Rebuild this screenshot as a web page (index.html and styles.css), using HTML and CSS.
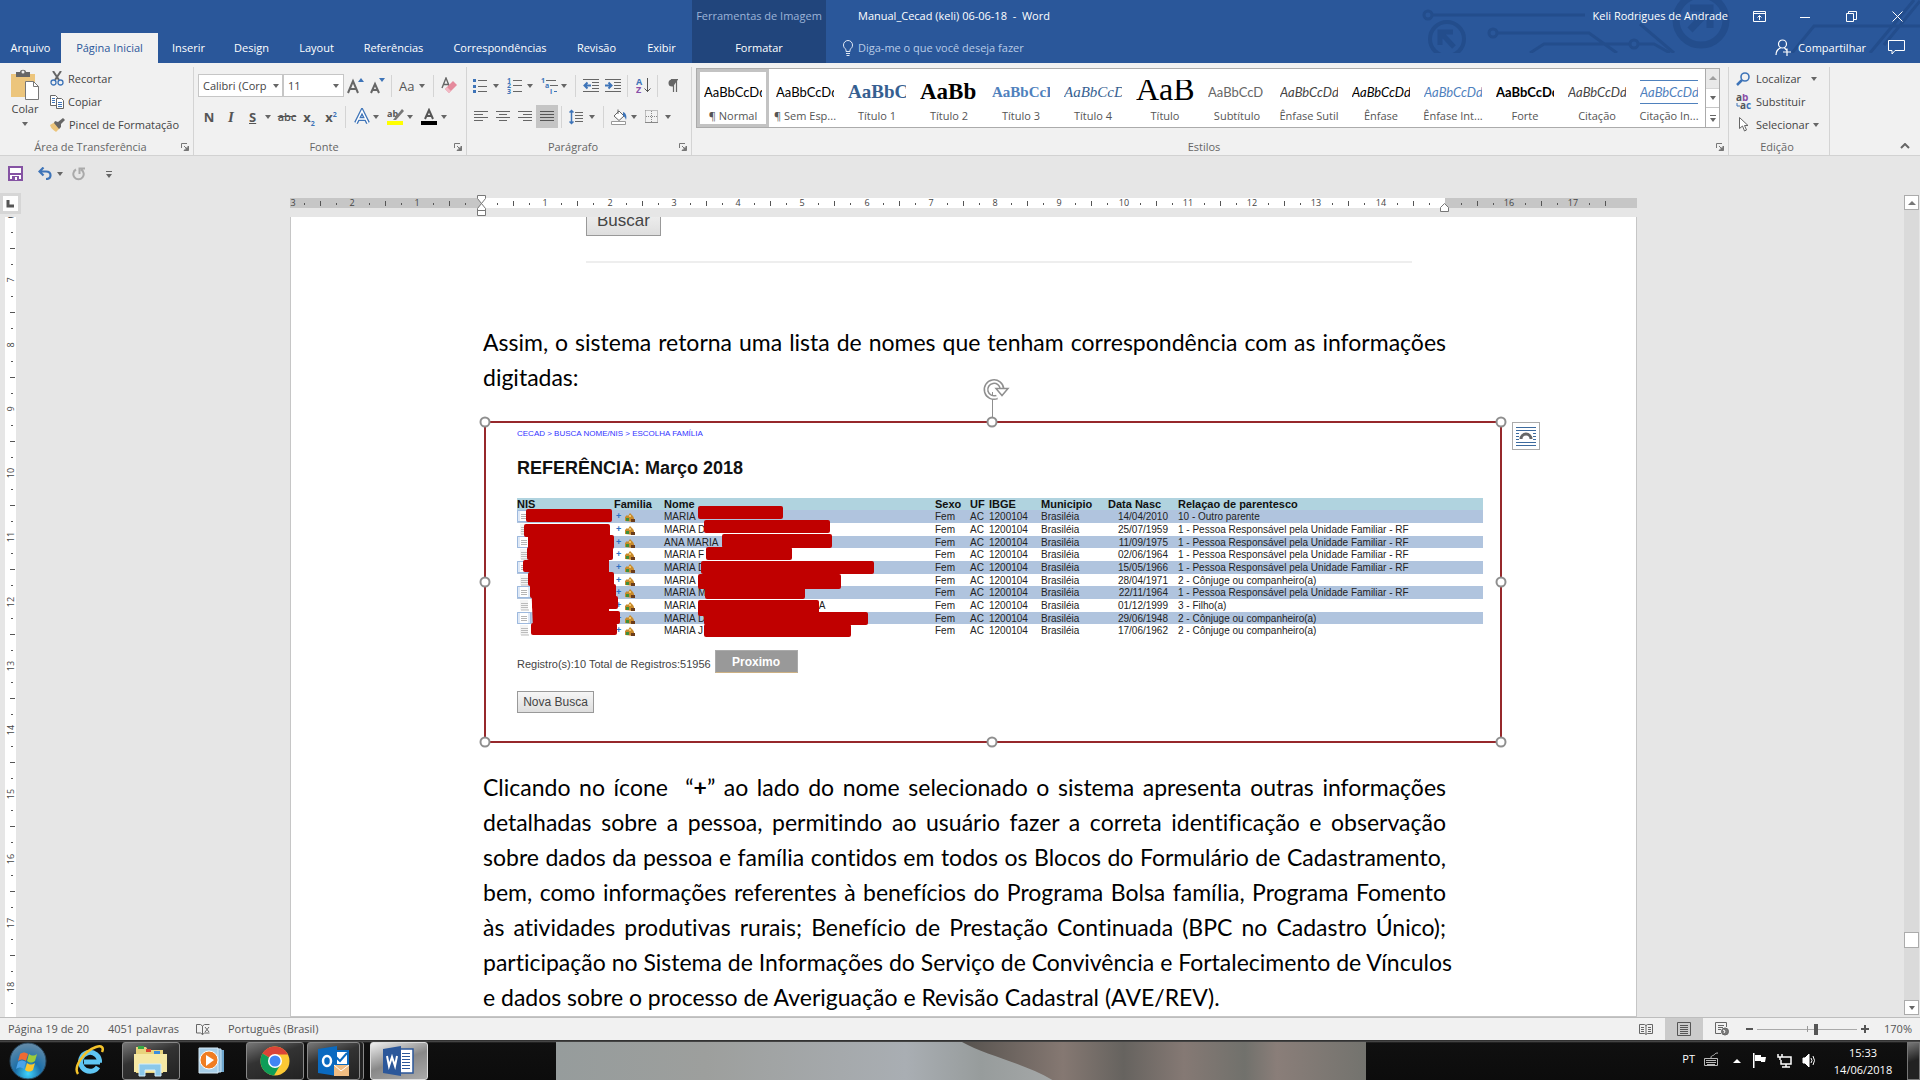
FILE: index.html
```html
<!DOCTYPE html>
<html lang="pt-BR">
<head>
<meta charset="utf-8">
<title>Manual_Cecad (keli) 06-06-18 - Word</title>
<link rel="stylesheet" href="styles.css">
</head>
<body>
<svg class="defs" aria-hidden="true">
  <symbol id="launch" viewBox="0 0 8 8"><path d="M.5 5V.5H6M3 3l3 3M7.5 3v4.5H3z" fill="none" stroke="#777"/><path d="M7.500 3.500v4h-4z" fill="#777"/></symbol>
  <symbol id="doc" viewBox="0 0 14 12"><path d="M.5.500h13v11H.5z" fill="#dfe9f6" stroke="#9db9de"/><path d="M3 1h8v10H3z" fill="#fff"/><path d="M4 4.500h6M4 6.500h6M4 8.500h6" stroke="#b5b5b5"/></symbol>
  <symbol id="doc2" viewBox="0 0 14 12"><path d="M3 1h8v10H3z" fill="#f4f4f4"/><path d="M4 4.500h7M4 6.500h7M4 8.500h7M4 11h8" stroke="#bbb"/></symbol>
  <symbol id="fam" viewBox="0 0 10 9"><path d="M0 8V4l2-2 1 1 2-3 3 3 1 2v4z" fill="#c98a2b"/><path d="M1 5h3v3H1z" fill="#3f8f3c"/><path d="M6 6h4v3H6z" fill="#6b3d1c"/><path d="M4 2h2v2H4z" fill="#f1c667"/></symbol>
</svg>

<header class="top">
  <svg class="circuit" viewBox="0 0 500 53" width="500" height="53" fill="none" stroke="#234d8c" stroke-width="3" aria-hidden="true">
    <circle cx="8" cy="15" r="4"/><path d="M12 15h153"/><circle cx="27" cy="39" r="17" stroke-width="4"/><path d="M34 47L21 33M20 45V32h13" stroke-width="5"/>
    <circle cx="73" cy="33" r="4"/><path d="M77 33h92l28 20M110 53l14-9h85"/><circle cx="214" cy="44" r="4"/><path d="M218 44h16l16 9M220 24l34 29"/>
    <circle cx="281" cy="20" r="25" stroke-width="7"/><path d="M270 30l19-20M270 8h20v20" stroke-width="7"/>
    <path d="M372 53l22-27h106M450 53L494 0M464 45L500 1"/>
  </svg>
  <nav class="tabs">
    <button class="tab">Arquivo</button><button class="tab on">Página Inicial</button><button class="tab">Inserir</button><button class="tab">Design</button><button class="tab">Layout</button><button class="tab">Referências</button><button class="tab">Correspondências</button><button class="tab">Revisão</button><button class="tab">Exibir</button>
  </nav>
  <div class="ctx"><span>Ferramentas de Imagem</span><button class="tab">Formatar</button></div>
  <div class="topright">
    <div class="titlerow">
      <h1>Manual_Cecad (keli) 06-06-18&nbsp; -&nbsp; Word</h1>
      <span class="user">Keli Rodrigues de Andrade</span>
      <button class="win" aria-label="Opções da Faixa de Opções"><svg width="13" height="11" fill="none" stroke="#fff"><path d="M.5.500h12v10H.5zM.5 2.500h12M6.500 9V4.500M4.500 6.500l2-2 2 2"/></svg></button>
      <button class="win" aria-label="Minimizar"><svg width="10" height="11" stroke="#fff"><path d="M0 6.500h10"/></svg></button>
      <button class="win" aria-label="Restaurar"><svg width="11" height="11" fill="none" stroke="#fff"><path d="M.5 2.500h7v8h-7zM2.500 2V.5h8v8H8"/></svg></button>
      <button class="win" aria-label="Fechar"><svg width="11" height="11" stroke="#fff"><path d="M.5.500l10 10M10.500.500l-10 10"/></svg></button>
    </div>
    <div class="tellrow">
      <svg width="12" height="16" fill="none" stroke="#dfe8f5"><path d="M4 11.500V9.500C2 8 1.500 6.500 1.500 5a4.500 4.500 0 0 1 9 0c0 1.500-.5 3-2.500 4.500v2zM4 13.500h4M4.500 15.500h3"/></svg>
      <input class="tell" type="text" aria-label="Diga-me o que você deseja fazer" placeholder="Diga-me o que você deseja fazer">
      <button class="share"><svg width="16" height="17" fill="none" stroke="#fff" stroke-width="1.200"><circle cx="7.500" cy="5" r="4"/><path d="M1 16c0-4 2-6 4.500-7M9.500 9l2 2M8 13h8M12 9.500V17"/></svg>Compartilhar</button>
      <button class="comment" aria-label="Comentários"><svg width="17" height="15" fill="none" stroke="#fff"><path d="M.5.500h16v10H7l-3 3.500V10.500H.5z"/></svg></button>
    </div>
  </div>
</header>

<section class="ribbon">
  <div class="group clip">
    <div class="body cliprow">
      <button class="paste">
        <svg width="30" height="32"><path d="M1 5h24v23H1z" fill="#ecc57c"/><path d="M6 3h4c0-3 6-3 6 0h4v5H6z" fill="#666"/><circle cx="13" cy="3" r="1.500" fill="#eee"/><path d="M15.500 12.500h8l5 5v13h-13z" fill="#fff" stroke="#777"/><path d="M23.500 12.500v5h5" fill="none" stroke="#777"/></svg>
        <span>Colar</span><i class="caret"></i>
      </button>
      <div class="stack">
        <button><svg width="14" height="15" fill="none"><path d="M3 0l6 9M11 0L5 9" stroke="#666" stroke-width="2"/><circle cx="3.500" cy="11.500" r="2.500" stroke="#3e74b8" stroke-width="1.300"/><circle cx="10.500" cy="11.500" r="2.500" stroke="#3e74b8" stroke-width="1.300"/></svg>Recortar</button>
        <button><svg width="14" height="14" fill="#fff" stroke="#666"><path d="M.5.500h5l2 2v8h-7z"/><path d="M6.500 3.500h5l2 2v8h-7z"/><path d="M2 3.500h3M2 5.500h3M2 7.500h3M8 7.500h4M8 9.500h4M8 11.500h4" stroke="#3e74b8"/></svg>Copiar</button>
        <button><svg width="15" height="14"><path d="M0 7l5-3 5 6-4 4C4 12 1 11 0 7z" fill="#ecc57c"/><path d="M5 3l3 1 5-4 2 2-4 4v3L9 11 4 5z" fill="#666"/></svg>Pincel de Formatação</button>
      </div>
    </div>
    <div class="gl"><span>Área de Transferência</span><button aria-label="Abrir Área de Transferência"><svg width="8" height="8"><use href="#launch"/></svg></button></div>
  </div>

  <div class="group font">
    <div class="body rows">
      <div class="row">
        <span class="combo c1"><input type="text" value="Calibri (Corp" aria-label="Fonte"><i class="caret"></i></span><span class="combo c2"><input type="text" value="11" aria-label="Tamanho da fonte"><i class="caret"></i></span>
        <button class="ib" aria-label="Aumentar"><svg width="18" height="18"><path d="M2 16L7 4l5 12M4 12h6" fill="none" stroke="#666" stroke-width="2"/><path d="M12 5l3-4 3 4z" fill="#3e74b8"/></svg></button>
        <button class="ib" aria-label="Diminuir"><svg width="18" height="18"><path d="M3 16l4-9 4 9M5 13h5" fill="none" stroke="#666" stroke-width="2"/><path d="M11 1h6l-3 4z" fill="#3e74b8"/></svg></button>
        <i class="sep"></i>
        <button class="ib split"><span class="aa">Aa</span><i class="caret"></i></button>
        <i class="sep"></i>
        <button class="ib" aria-label="Limpar formatação"><svg width="16" height="17"><path d="M1 11L5 1l4 10M2.500 7.500h5" fill="none" stroke="#666" stroke-width="1.400"/><path d="M4 12l8-8 4 4-8 8z" fill="#e58a9c"/><path d="M4 12l2-2 4 4-2 2z" fill="#f2b9c4"/></svg></button>
      </div>
      <div class="row">
        <button class="ib"><b>N</b></button><button class="ib"><b class="it">I</b></button><button class="ib split"><b class="un">S</b><i class="caret"></i></button><button class="ib"><s>abc</s></button><button class="ib"><b>x<sub>2</sub></b></button><button class="ib"><b>x<sup>2</sup></b></button>
        <i class="sep"></i>
        <button class="ib split" aria-label="Efeitos de texto"><svg width="18" height="18" fill="none"><path d="M3 15L9 3l6 12M5 11h8" stroke="#3e74b8" stroke-width="4"/><path d="M3 15L9 3l6 12M5 11h8" stroke="#fff" stroke-width="1.500"/></svg><i class="caret"></i></button>
        <button class="ib split" aria-label="Realce"><svg width="17" height="18"><text x="0" y="9" font-size="9" font-weight="700" fill="#555" font-family="Open Sans">ab</text><path d="M15 1l2 2-8 9H6z" fill="#777"/><path d="M0 13h16v4H0z" fill="#ff0"/></svg><i class="caret"></i></button>
        <button class="ib split" aria-label="Cor da fonte"><svg width="16" height="18"><path d="M4 11L8 2l4 9M5.500 8h5" fill="none" stroke="#555" stroke-width="2"/><path d="M0 13h16v4H0z"/></svg><i class="caret"></i></button>
      </div>
    </div>
    <div class="gl"><span>Fonte</span><button aria-label="Abrir Fonte"><svg width="8" height="8"><use href="#launch"/></svg></button></div>
  </div>

  <div class="group para">
    <div class="body rows">
      <div class="row">
        <button class="ib split" aria-label="Marcadores"><svg width="15" height="15"><path d="M5 2.500h9M5 8.500h9M5 13.500h9" stroke="#666"/><path d="M0 1h3v3H0zM0 7h3v3H0zM0 12h3v3H0z" fill="#3e74b8"/></svg><i class="caret"></i></button>
        <button class="ib split" aria-label="Numeração"><svg width="15" height="17"><path d="M6 3.500h9M6 8.500h9M6 14.500h9" stroke="#666"/><g font-size="7" font-weight="700" fill="#3e74b8" font-family="Open Sans"><text y="6">1</text><text y="11">2</text><text y="17">3</text></g></svg><i class="caret"></i></button>
        <button class="ib split" aria-label="Lista multinível"><svg width="17" height="17"><path d="M5 3.500h10M9 8.500h8" stroke="#666"/><path d="M13 14.500h3" stroke="#3e74b8"/><g font-size="7" font-weight="700" fill="#3e74b8" font-family="Open Sans"><text y="6">1</text><text x="4" y="11">a</text><text x="9" y="17">i</text></g></svg><i class="caret"></i></button>
        <i class="sep"></i>
        <button class="ib" aria-label="Diminuir recuo"><svg width="16" height="14" fill="none"><path d="M0 .5h16M9 3.500h7M9 6.500h7M9 9.500h7M0 12.500h16" stroke="#666"/><path d="M8 6.500H2M4.500 3.500l-3 3 3 3" stroke="#3e74b8" stroke-width="2"/></svg></button>
        <button class="ib" aria-label="Aumentar recuo"><svg width="16" height="14" fill="none"><path d="M0 .5h16M9 3.500h7M9 6.500h7M9 9.500h7M0 12.500h16" stroke="#666"/><path d="M0 6.500h6M3.500 3.500l3 3-3 3" stroke="#3e74b8" stroke-width="2"/></svg></button>
        <i class="sep"></i>
        <button class="ib" aria-label="Classificar"><svg width="15" height="17"><g font-size="9" font-weight="700" font-family="Open Sans"><text y="8" fill="#3e74b8">A</text><text y="16" fill="#8a4fa8">Z</text></g><path d="M11.500 1v14M8.500 11.500l3 3 3-3" fill="none" stroke="#555"/></svg></button>
        <i class="sep"></i>
        <button class="ib" aria-label="Mostrar tudo"><svg width="10" height="13"><path d="M10 .5H4a3.500 3.500 0 0 0 0 7h1" fill="#666"/><path d="M5.500 0v13M8.500 0v13M3 .5h7" stroke="#666" stroke-width="1.200"/></svg></button>
      </div>
      <div class="row">
        <button class="ib" aria-label="Esquerda"><svg width="14" height="12" stroke="#666"><path d="M0 .5h14M0 3.500h9M0 6.500h14M0 9.500h9"/></svg></button>
        <button class="ib" aria-label="Centralizar"><svg width="14" height="12" stroke="#666"><path d="M0 .5h14M3 3.500h8M0 6.500h14M3 9.500h8"/></svg></button>
        <button class="ib" aria-label="Direita"><svg width="14" height="12" stroke="#666"><path d="M0 .5h14M5 3.500h9M0 6.500h14M5 9.500h9"/></svg></button>
        <button class="ib sel" aria-label="Justificar"><svg width="14" height="12" stroke="#555"><path d="M0 .5h14M0 3.500h14M0 6.500h14M0 9.500h14"/></svg></button>
        <i class="sep"></i>
        <button class="ib split" aria-label="Espaçamento"><svg width="15" height="16" fill="none"><path d="M6 3.500h8M6 6.500h8M6 9.500h8M6 12.500h8" stroke="#666"/><path d="M2.500 1v14M.5 3.500l2-2 2 2M.5 12.500l2 2 2-2" stroke="#3e74b8" stroke-width="1.500"/></svg><i class="caret"></i></button>
        <i class="sep"></i>
        <button class="ib split" aria-label="Sombreamento"><svg width="17" height="17" fill="none"><path d="M3 8l5-5 5 5-5 4.500z" fill="#fff" stroke="#666"/><path d="M7 6V1.500" stroke="#666"/><path d="M12 4c3 1 4 4 3 8-1-3-2-4-3-4z" fill="#3e74b8"/><path d="M.5 13.500h14v3H.5z" fill="#fff" stroke="#999"/></svg><i class="caret"></i></button>
        <button class="ib split" aria-label="Bordas"><svg width="14" height="14" fill="none" stroke="#888"><path d="M.5.500h12v12M.5.500v12M6.500 1v12M1 6.500h12" stroke-dasharray="1 1"/><path d="M0 12.500h13"/></svg><i class="caret"></i></button>
      </div>
    </div>
    <div class="gl"><span>Parágrafo</span><button aria-label="Abrir Parágrafo"><svg width="8" height="8"><use href="#launch"/></svg></button></div>
  </div>

  <div class="group styles">
    <div class="body gallery">
      <button class="st on"><span class="sm">AaBbCcDd</span><span>¶ Normal</span></button>
      <button class="st"><span class="sm">AaBbCcDd</span><span>¶ Sem Esp...</span></button>
      <button class="st"><span class="sm t1">AaBbCc</span><span>Título 1</span></button>
      <button class="st"><span class="sm t2">AaBb</span><span>Título 2</span></button>
      <button class="st"><span class="sm t3">AaBbCcD</span><span>Título 3</span></button>
      <button class="st"><span class="sm t4">AaBbCcD</span><span>Título 4</span></button>
      <button class="st"><span class="sm t5">AaB</span><span>Título</span></button>
      <button class="st"><span class="sm gray">AaBbCcD</span><span>Subtítulo</span></button>
      <button class="st"><span class="sm ital">AaBbCcDd</span><span>Ênfase Sutil</span></button>
      <button class="st"><span class="sm ital black">AaBbCcDd</span><span>Ênfase</span></button>
      <button class="st"><span class="sm ital blue">AaBbCcDd</span><span>Ênfase Int...</span></button>
      <button class="st"><span class="sm bold">AaBbCcDd</span><span>Forte</span></button>
      <button class="st"><span class="sm ital">AaBbCcDd</span><span>Citação</span></button>
      <button class="st"><span class="sm ital blue lined">AaBbCcDd</span><span>Citação In...</span></button>
      <div class="gs"><button class="off" aria-label="Acima"><i class="tri"></i></button><button aria-label="Abaixo"><i class="caret"></i></button><button class="more" aria-label="Mais"><i class="caret"></i></button></div>
    </div>
    <div class="gl"><span>Estilos</span><button aria-label="Abrir Estilos"><svg width="8" height="8"><use href="#launch"/></svg></button></div>
  </div>

  <div class="group edit">
    <div class="body stack">
      <button><svg width="16" height="14" fill="none"><circle cx="9" cy="5" r="4" stroke="#3e74b8" stroke-width="1.600"/><path d="M6 8l-5 5" stroke="#3e74b8" stroke-width="2.500"/></svg>Localizar<i class="caret far"></i></button>
      <button><svg width="16" height="16" font-size="10" font-weight="700" font-family="Open Sans"><text y="7" fill="#555">a<tspan fill="#8a4fa8">b</tspan></text><text x="4" y="15" fill="#555">a<tspan fill="#3e74b8">c</tspan></text><path d="M1 9v3h3" fill="none" stroke="#3e74b8"/></svg>Substituir</button>
      <button><svg width="16" height="15"><path d="M3.500.500v11l3-2.500 2 5 2-1-2-4.500h3.500z" fill="#fff" stroke="#666"/></svg>Selecionar<i class="caret"></i></button>
    </div>
    <div class="gl"><span>Edição</span></div>
  </div>
  <button class="collapse" aria-label="Recolher"><svg width="10" height="6" fill="none" stroke="#666" stroke-width="2"><path d="M1 5l4-4 4 4"/></svg></button>
</section>

<div class="qat">
  <button aria-label="Salvar"><svg width="15" height="15"><path d="M1 1h13v13H1z" fill="#fff" stroke="#8553a3" stroke-width="2"/><path d="M1 7h13v2H1zM4 10h7v4H4z" fill="#8553a3"/><path d="M7 11h2v3H7z" fill="#fff"/></svg></button>
  <button aria-label="Desfazer"><svg width="15" height="13" fill="none" stroke="#3e74b8" stroke-width="2.200"><path d="M1 4.500h7c6 0 6 7.500 0 7.500M5.500.500l-4 4 4 4"/></svg></button><i class="caret"></i>
  <button aria-label="Refazer"><svg width="14" height="14" fill="none" stroke="#aaa" stroke-width="2"><path d="M4 2.500a5.200 5.200 0 1 0 5 0M7.500 7V1.500H13"/></svg></button>
  <button class="more" aria-label="Personalizar"><i class="caret"></i></button>
</div>

<main class="work">
  <div class="corner"><button aria-label="Tabulação"><svg width="9" height="8"><path d="M2 0v6h6" fill="none" stroke="#555" stroke-width="3"/></svg></button></div>
  <div class="hrule"><svg id="hr" width="1347" height="24" aria-hidden="true"></svg></div>
  <div class="vrule"><svg id="vr" width="11" height="801" aria-hidden="true"></svg></div>
  <div class="view">
    <article class="page">
      <div class="prev"><button class="grey">Buscar</button></div>
      <p><span>Assim, o sistema retorna uma lista de nomes que tenham correspondência com as informações</span> <span class="end">digitadas:</span></p>
      <figure class="pic">
        <nav class="crumb"><a href="#">CECAD &gt; BUSCA NOME/NIS &gt; ESCOLHA FAMÍLIA</a></nav>
        <h2>REFERÊNCIA: Março 2018</h2>
        <table>
          <colgroup><col class="k1"><col class="k2"><col class="k3"><col class="k4"><col class="k5"><col class="k6"><col class="k7"><col class="k8"><col></colgroup>
          <thead><tr><th>NIS</th><th>Familia</th><th>Nome</th><th>Sexo</th><th>UF</th><th>IBGE</th><th>Municipio</th><th>Data Nasc</th><th>Relaçao de parentesco</th></tr></thead>
          <tbody>
            <tr><td><svg class="d"><use href="#doc"/></svg></td><td><b>+</b><svg class="f"><use href="#fam"/></svg></td><td>MARIA</td><td>Fem</td><td>AC</td><td>1200104</td><td>Brasiléia</td><td>14/04/2010</td><td>10 - Outro parente</td></tr>
            <tr><td><svg class="d"><use href="#doc2"/></svg></td><td><b>+</b><svg class="f"><use href="#fam"/></svg></td><td>MARIA D</td><td>Fem</td><td>AC</td><td>1200104</td><td>Brasiléia</td><td>25/07/1959</td><td>1 - Pessoa Responsável pela Unidade Familiar - RF</td></tr>
            <tr><td><svg class="d"><use href="#doc"/></svg></td><td><b>+</b><svg class="f"><use href="#fam"/></svg></td><td>ANA MARIA</td><td>Fem</td><td>AC</td><td>1200104</td><td>Brasiléia</td><td>11/09/1975</td><td>1 - Pessoa Responsável pela Unidade Familiar - RF</td></tr>
            <tr><td><svg class="d"><use href="#doc2"/></svg></td><td><b>+</b><svg class="f"><use href="#fam"/></svg></td><td>MARIA F</td><td>Fem</td><td>AC</td><td>1200104</td><td>Brasiléia</td><td>02/06/1964</td><td>1 - Pessoa Responsável pela Unidade Familiar - RF</td></tr>
            <tr><td><svg class="d"><use href="#doc"/></svg></td><td><b>+</b><svg class="f"><use href="#fam"/></svg></td><td>MARIA D</td><td>Fem</td><td>AC</td><td>1200104</td><td>Brasiléia</td><td>15/05/1966</td><td>1 - Pessoa Responsável pela Unidade Familiar - RF</td></tr>
            <tr><td><svg class="d"><use href="#doc2"/></svg></td><td><b>+</b><svg class="f"><use href="#fam"/></svg></td><td>MARIA</td><td>Fem</td><td>AC</td><td>1200104</td><td>Brasiléia</td><td>28/04/1971</td><td>2 - Cônjuge ou companheiro(a)</td></tr>
            <tr><td><svg class="d"><use href="#doc"/></svg></td><td><b>+</b><svg class="f"><use href="#fam"/></svg></td><td>MARIA M</td><td>Fem</td><td>AC</td><td>1200104</td><td>Brasiléia</td><td>22/11/1964</td><td>1 - Pessoa Responsável pela Unidade Familiar - RF</td></tr>
            <tr><td><svg class="d"><use href="#doc2"/></svg></td><td><b>+</b><svg class="f"><use href="#fam"/></svg></td><td>MARIA<span class="tail">A</span></td><td>Fem</td><td>AC</td><td>1200104</td><td>Brasiléia</td><td>01/12/1999</td><td>3 - Filho(a)</td></tr>
            <tr><td><svg class="d"><use href="#doc"/></svg></td><td><b>+</b><svg class="f"><use href="#fam"/></svg></td><td>MARIA D</td><td>Fem</td><td>AC</td><td>1200104</td><td>Brasiléia</td><td>29/06/1948</td><td>2 - Cônjuge ou companheiro(a)</td></tr>
            <tr><td><svg class="d"><use href="#doc2"/></svg></td><td><b>+</b><svg class="f"><use href="#fam"/></svg></td><td>MARIA J</td><td>Fem</td><td>AC</td><td>1200104</td><td>Brasiléia</td><td>17/06/1962</td><td>2 - Cônjuge ou companheiro(a)</td></tr>
          </tbody>
        </table>
        <div class="regs"><span>Registro(s):10 Total de Registros:51956</span><button class="next">Proximo</button></div>
        <button class="grey nova">Nova Busca</button>
        <svg class="redact" viewBox="485 422 1017 322" width="1017" height="322" fill="#c00000" aria-hidden="true">
          <rect x="526" y="510" width="86" height="13" rx="2"/><rect x="524" y="525" width="86" height="13" rx="2"/><rect x="528" y="536" width="86" height="14" rx="2"/><rect x="527" y="548" width="86" height="13" rx="2"/><rect x="523" y="561" width="86" height="12" rx="2"/><rect x="528" y="573" width="86" height="14" rx="2"/><rect x="530" y="585" width="86" height="14" rx="2"/><rect x="532" y="597" width="86" height="13" rx="2"/><rect x="534" y="612" width="86" height="13" rx="2"/><rect x="531" y="624" width="86" height="12" rx="2"/>
          <path d="M529 530h80v100h-76z"/>
          <rect x="698" y="507" width="85" height="13" rx="2"/><rect x="704" y="521" width="126" height="13" rx="2"/><rect x="722" y="535" width="110" height="14" rx="2"/><rect x="706" y="548" width="86" height="13" rx="2"/><rect x="701" y="562" width="173" height="13" rx="2"/><rect x="698" y="575" width="143" height="15" rx="2"/><rect x="705" y="587" width="100" height="13" rx="2"/><rect x="698" y="601" width="121" height="16" rx="2"/><rect x="704" y="613" width="164" height="13" rx="2"/><rect x="704" y="625" width="147" height="13" rx="2"/>
        </svg>
        <svg class="handles" viewBox="0 0 1037 380" width="1037" height="380" fill="#fff" stroke="#8f8f8f" stroke-width="2" aria-hidden="true">
          <path d="M517.500 45V20" stroke-width="1"/>
          <circle cx="10" cy="50" r="4.500"/><circle cx="517" cy="50" r="4.500"/><circle cx="1026" cy="50" r="4.500"/><circle cx="10" cy="210" r="4.500"/><circle cx="1026" cy="210" r="4.500"/><circle cx="10" cy="370" r="4.500"/><circle cx="517" cy="370" r="4.500"/><circle cx="1026" cy="370" r="4.500"/>
        </svg>
        <svg class="rotate" width="28" height="24" fill="none"><path d="M20 11A8 8 0 1 0 15 19" stroke="#8f8f8f" stroke-width="5"/><path d="M20 11A8 8 0 1 0 15 19" stroke="#fff" stroke-width="2"/><path d="M14 10.500h12l-6 7z" fill="#fff" stroke="#8f8f8f" stroke-width="1.500"/></svg>
        <button class="layopt" aria-label="Opções de Layout"><svg width="20" height="20" fill="none" stroke="#3c6a9e"><path d="M0 1.500h20M0 4.500h20M0 7.500h3M17 7.500h3M0 10.500h3M17 10.500h3M0 13.500h3M17 13.500h3M0 16.500h20M0 19.500h20"/><path d="M5 13a5 5 0 0 1 10 0" stroke="#666" stroke-width="3"/></svg></button>
      </figure>
      <p><span>Clicando no ícone &nbsp;“<b>+</b>” ao lado do nome selecionado o sistema apresenta outras informações</span> <span>detalhadas sobre a pessoa, permitindo ao usuário fazer a correta identificação e observação</span> <span>sobre dados da pessoa e família contidos em todos os Blocos do Formulário de Cadastramento,</span> <span>bem, como informações referentes à benefícios do Programa Bolsa família, Programa Fomento</span> <span>às atividades produtivas rurais; Benefício de Prestação Continuada (BPC no Cadastro Único);</span> <span>participação no Sistema de Informações do Serviço de Convivência e Fortalecimento de Vínculos</span> <span class="end">e dados sobre o processo de Averiguação e Revisão Cadastral (AVE/REV).</span></p>
    </article>
  </div>
  <div class="scroll"><button aria-label="Rolar para cima"><i class="tri"></i></button><div class="track"><div class="thumb"></div></div><button aria-label="Rolar para baixo"><i class="caret"></i></button></div>
</main>

<footer class="status">
  <span class="s1">Página 19 de 20</span><span class="s2">4051 palavras</span>
  <svg width="15" height="13" fill="none" stroke="#666"><path d="M.5 1.500h4l2 1.500v8.500l-2-1.500h-4zM6.500 3l2-1.500h5M6.500 11.500l2-1.500h5M9 4l4 5M13 4l-4 5"/></svg>
  <span class="s3">Português (Brasil)</span>
  <button class="vb" aria-label="Modo de Leitura"><svg width="14" height="13" fill="none" stroke="#666"><path d="M.5 1.500h5l1.500 1 1.500-1h5v9h-5l-1.500 1-1.500-1h-5zM7 2v9M2 4.500h3M2 6.500h3M2 8.500h3M9 4.500h3M9 6.500h3M9 8.500h3"/></svg></button>
  <button class="vb on" aria-label="Layout de Impressão"><svg width="14" height="14" fill="none" stroke="#555"><path d="M.5.500h13v13H.5zM3 3.500h8M3 5.500h8M3 7.500h8M3 9.500h8M3 11.500h8"/></svg></button>
  <button class="vb" aria-label="Layout da Web"><svg width="15" height="14" fill="none" stroke="#666"><path d="M6 11.500H.5V.500h11V5M3 3.500h6M3 5.500h5M3 7.500h3"/><circle cx="10" cy="9.500" r="3.500" fill="#777"/><path d="M8 8l2 1-1 2" stroke="#fff"/></svg></button>
  <button class="zb" aria-label="Menos zoom"><svg width="8" height="8"><path d="M1 3h7v2H1z" fill="#555"/></svg></button>
  <input class="zoom" type="range" min="10" max="281" value="170" aria-label="Zoom">
  <button class="zb" aria-label="Mais zoom"><svg width="8" height="8"><path d="M0 3h8v2H0zM3 0h2v8H3z" fill="#555"/></svg></button>
  <span class="pct">170%</span>
</footer>

<div class="task">
  <svg class="wall" viewBox="0 0 810 40" preserveAspectRatio="none" aria-hidden="true">
    <defs><linearGradient id="w1"><stop offset="0" stop-color="#969c9c"/><stop offset=".3" stop-color="#9d9f9d"/><stop offset=".7" stop-color="#a9aeb3"/><stop offset=".85" stop-color="#979c9c"/><stop offset="1" stop-color="#a5a8a8"/></linearGradient><linearGradient id="w2"><stop offset="0" stop-color="#56524e"/><stop offset=".25" stop-color="#857872"/><stop offset=".4" stop-color="#66635f"/><stop offset=".55" stop-color="#857974"/><stop offset=".7" stop-color="#71716c"/><stop offset=".78" stop-color="#8a7e79"/><stop offset="1" stop-color="#73736e"/></linearGradient></defs>
    <path d="M0 0h500v40H0z" fill="url(#w1)"/><path d="M406 0h404v40H498C470 22 430 14 406 0z" fill="url(#w2)"/>
  </svg>
  <button class="tk orb" aria-label="Iniciar"><svg width="38" height="38"><defs><radialGradient id="o" cx=".5" cy=".85" r=".9"><stop offset="0" stop-color="#3fd5ff"/><stop offset=".4" stop-color="#1c6fa8"/><stop offset="1" stop-color="#6f8fa8"/></radialGradient></defs><circle cx="19" cy="19" r="18" fill="url(#o)" stroke="#29485f"/><path d="M11 12c3-2 5-2 8 0l-2 7c-3-2-5-2-8 0z" fill="#ef6a33"/><path d="M20 12c3 2 5 2 8 0l-2 7c-3 2-5 2-8 0z" fill="#9ccb3b"/><path d="M9 20c3-2 5-2 8 0l-2 7c-3-2-5-2-8 0z" fill="#4ba3e8"/><path d="M18 21c3 2 5 2 8 0l-2 7c-3 2-5 2-8 0z" fill="#fcc52c"/></svg></button>
  <button class="tk" aria-label="Internet Explorer"><svg width="32" height="32" fill="none"><path d="M26 17H10M25.500 17.500A9.500 9.500 0 1 0 24 22" stroke="#5fc6f3" stroke-width="5"/><path d="M4 29C-1 22 10 6 22 2c6-2 8 1 6 5" stroke="#f4c32b" stroke-width="2.500"/></svg></button>
  <button class="tk tile" aria-label="Explorador"><svg width="34" height="32"><path d="M2 2h10l2 3h15v23H2z" fill="#e8d37c"/><path d="M4 1h6v3H4z" fill="#37a845"/><path d="M12 4h5v3h-5z" fill="#d9432f"/><path d="M20 6h6v3h-6z" fill="#3c8ddd"/><path d="M0 9h33v18H0z" fill="#f6e8a4"/><path d="M5 19h22v12h-6v-6H11v6H5z" fill="#8cc8ea" stroke="#d5eefb"/></svg></button>
  <button class="tk media" aria-label="Media Player"><svg width="28" height="28"><path d="M8 3h18v22H8z" fill="#6ea6cd"/><path d="M5 2h18v23H5z" fill="#8fbfe0" stroke="#c9e2f3"/><path d="M1 1h19v25H1z" fill="#a8cfe8" stroke="#d6eaf6"/><circle cx="11" cy="13" r="9" fill="#f07d22" stroke="#fff"/><path d="M8 8l8 5-8 6z" fill="#fff"/></svg></button>
  <button class="tk tile" aria-label="Chrome"><svg width="30" height="30"><circle cx="15" cy="15" r="14.500" fill="#fcc934"/><path d="M15 15L2.500 7.500A14.500 14.500 0 0 1 28 8.500H15z" fill="#db4437"/><path d="M15 15L2.500 7.500A14.500 14.500 0 0 0 14 29.500l6.500-11z" fill="#0f9d58"/><circle cx="15" cy="15" r="7" fill="#fff"/><circle cx="15" cy="15" r="5.500" fill="#4285f4"/></svg></button>
  <button class="tk tile multi" aria-label="Outlook"><svg width="32" height="32"><path d="M15 6h15v14H15z" fill="#fff" stroke="#0a6ac0" stroke-width="2"/><path d="M18 12l4 4 7-8" fill="none" stroke="#0a6ac0" stroke-width="2"/><path d="M0 4l19-3v30L0 28z" fill="#0a6ac0"/><ellipse cx="9" cy="16" rx="4" ry="5" fill="none" stroke="#fff" stroke-width="2.500"/><path d="M16 20h15v11H16z" fill="#f0bd82"/><path d="M16 20l7 6 8-6" fill="none" stroke="#fff"/></svg></button>
  <button class="tk tile act" aria-label="Word"><svg width="32" height="32"><path d="M16 4h14v24H16z" fill="#fff" stroke="#2b579a" stroke-width="1.500"/><path d="M19 8.500h8M19 11.500h8M19 14.500h8M19 17.500h8M19 20.500h8M19 23.500h8" stroke="#2b579a"/><path d="M0 4l18-3v30L0 28z" fill="#2b579a"/><path d="M4 11l2 10 3-9 3 9 2-10" fill="none" stroke="#fff" stroke-width="2"/></svg></button>
  <span class="pt">PT</span>
  <div class="tray">
    <svg class="kb" width="16" height="14" fill="none" stroke="#bbb"><path d="M1.500 6.500h13v7h-13zM3 8.500h10M3 10.500h10M4 12.500h8M8 6c0-3 2-2 3-3s1-2 4-2"/></svg>
    <svg width="10" height="6"><path d="M1 5l4-4 4 4z" fill="#fff"/></svg>
    <svg width="15" height="15"><path d="M1 0h1.500v15H1zM3 2h6v6H3zM9 4h5l-1 5H9z" fill="#fff"/></svg>
    <svg width="15" height="15" fill="none" stroke="#fff" stroke-width="1.500"><path d="M5 4h9v7H4V7M9 11v3M5 14h8M1 1v3h4V1M3 4v3"/></svg>
    <svg width="15" height="15" fill="none" stroke="#fff"><path d="M1 5h2l4-4v13l-4-4H1z" fill="#fff"/><path d="M9 5q2 2.500 0 5M11 3q3 4.500 0 9"/></svg>
  </div>
  <div class="clock"><span>15:33</span><span>14/06/2018</span></div>
  <button class="desk" aria-label="Mostrar área de trabalho"></button>
</div>
<script src="rulers.js"></script>
</body>
</html>
```
FILE: styles.css
```css
* { box-sizing: border-box; }
html, body { height: 100%; }
body {
  margin: 0; display: flex; flex-direction: column; overflow: hidden;
  font: 11px/16px "Open Sans", "Noto Sans", sans-serif; color: #444; background: #e6e6e6;
}
button { font: inherit; color: inherit; background: none; border: 0; padding: 0; }
input { font: inherit; color: inherit; border: 0; padding: 0; outline: 0; background: none; min-width: 0; }
svg { display: block; flex: none; }
.defs { position: absolute; width: 0; height: 0; }
.caret { flex: none; width: 0; height: 0; border: 3px solid transparent; border-top: 4px solid #666; border-bottom: 0; }
.tri { flex: none; width: 0; height: 0; border: 4px solid transparent; border-bottom: 4px solid #777; border-top: 0; }

/* title bar and tabs */
.top { position: relative; display: flex; flex: none; height: 63px; background: #2a579a; color: #fff; }
.circuit { position: absolute; right: 0; top: 0; }
.tabs { flex: none; display: grid; grid-template-columns: 61px 97px 61px 65px 65px 89px 124px 69px 61px; align-self: flex-end; }
.tab { height: 30px; white-space: nowrap; }
.tab.on { background: #f1f1f1; color: #2a579a; }
.ctx { flex: none; width: 134px; background: #21457c; display: flex; flex-direction: column; align-items: center; justify-content: space-between; }
.ctx span { line-height: 32px; color: #9db4d8; white-space: nowrap; }
.topright { position: relative; flex: 1; display: flex; flex-direction: column; }
.titlerow { display: flex; align-items: center; height: 32px; padding: 0 0 0 32px; }
.titlerow h1 { margin: 0; font: inherit; flex: 1; }
.user { margin-right: 8px; }
.win { width: 46px; height: 32px; display: grid; place-items: center; }
.tellrow { display: flex; align-items: center; height: 31px; padding: 0 15px 0 16px; }
.tell { flex: 1; margin-left: 4px; color: #b9cbe6; }
.tell::placeholder { color: #b9cbe6; opacity: 1; }
.share { display: flex; align-items: center; gap: 7px; margin-right: 22px; }

/* ribbon */
.ribbon { display: flex; flex: none; height: 93px; background: #f1f1f1; border-bottom: 1px solid #d2d2d2; }
.group { display: flex; flex-direction: column; height: 88px; margin-top: 4px; border-right: 1px solid #d4d4d4; flex: none; }
.clip { width: 194px; }
.font { width: 273px; }
.para { width: 225px; }
.styles { flex: 1; min-width: 0; }
.edit { width: 101px; }
.body { height: 72px; flex: none; }
.gl { display: flex; align-items: center; height: 16px; color: #666; padding-right: 4px; }
.gl span { flex: 1; text-align: center; }
.cliprow { display: flex; }
.paste { width: 50px; display: flex; flex-direction: column; align-items: center; padding-top: 2px; }
.paste span { margin-bottom: 5px; }
.stack { display: flex; flex-direction: column; }
.stack button { display: flex; align-items: center; gap: 4px; height: 23px; white-space: nowrap; }
.rows { padding: 7px 0 0 4px; display: flex; flex-direction: column; gap: 8px; }
.para .rows { padding-left: 3px; }
.row { display: flex; align-items: center; height: 23px; }
.combo { display: flex; align-items: center; height: 23px; background: #fff; border: 1px solid #c6c6c6; padding: 0 4px; }
.combo input { flex: 1; width: 10px; }
.c1 { width: 85px; padding-right: 3px; }
.c2 { width: 61px; }
.ib { flex: none; width: 22px; height: 23px; display: flex; align-items: center; justify-content: center; font-size: 13px; color: #555; }
.split { width: 34px; justify-content: space-between; padding: 0 5px 0 3px; }
.sel { background: #c5c5c5; }
.sep { flex: none; width: 1px; height: 22px; background: #d4d4d4; margin: 0 4px 0 3px; }
.aa { font-size: 13px; }
.it { font-style: italic; font-family: "Liberation Serif", serif; font-size: 15px; }
.un { text-decoration: underline; padding-left: 4px; }
.ib s { font-size: 11px; font-weight: 600; }
.ib sub, .ib sup { font-size: 7px; color: #3e74b8; line-height: 0; }

.gallery { display: flex; height: 60px; margin: 1px 8px 11px 4px; border: 1px solid #ababab; background: #fff; }
.st { flex: 1 1 0; min-width: 0; display: flex; flex-direction: column; align-items: center; padding: 8px 0 0; border: 3px solid transparent; color: #555; white-space: nowrap; }
.st.on { border-color: #c3c3c3; }
.st > span:last-child { margin-top: 4px; }
.sm { display: block; width: 58px; height: 24px; font: 13px/24px Lato, sans-serif; color: #000; overflow: hidden; text-align: left; flex: none; }
.t1, .t2, .t3, .t4, .t5 { font-family: "Liberation Serif", serif; font-weight: 700; }
.t1 { font-size: 19px; color: #365f91; } .t2 { font-size: 23px; } .t3 { font-size: 15px; color: #4f81bd; }
.t4 { font-size: 15px; color: #365f91; font-weight: 400; font-style: italic; }
.t5 { font-size: 32px; font-weight: 400; line-height: 18px; }
.gray { color: #666; } .ital { font-style: italic; color: #444; } .black { color: #000; } .blue { color: #4f81bd; } .bold { font-weight: 700; }
.lined { border-top: 1px solid #4f81bd; border-bottom: 1px solid #4f81bd; line-height: 22px; }
.gs { width: 14px; flex: none; display: flex; flex-direction: column; border-left: 1px solid #ababab; }
.gs button { flex: 1; display: grid; place-content: center; border-bottom: 1px solid #c6c6c6; }
.gs .off { background: #e1e1e1; opacity: .7; }
.gs button:last-child { border-bottom: 0; }
.more .caret { position: relative; margin-top: 4px; }
.more .caret::before { content: ""; position: absolute; left: -3px; top: -7px; width: 6px; height: 1px; background: #666; }
.edit .stack { padding-left: 7px; }
.far { margin-left: 6px; }
.collapse { width: 90px; display: flex; justify-content: flex-end; align-self: flex-end; padding: 0 10px 6px 0; }

/* quick access toolbar */
.qat { flex: none; display: flex; align-items: center; height: 37px; padding: 0 0 2px 8px; }
.qat button { display: flex; align-items: center; }
.qat button:nth-of-type(2) { margin: 0 4px 0 15px; }
.qat button:nth-of-type(3) { margin: 0 20px 0 9px; }

/* document area */
.work { flex: 1; min-height: 0; display: grid; grid-template: 24px 1fr / 23px 1fr 16px; border-bottom: 1px solid #bdbdbd; }
.corner button { width: 21px; height: 21px; border: 3px solid #d6d6d6; background: #fdfdfd; display: grid; place-content: center; }
.hrule { display: flex; justify-content: center; overflow: hidden; }
.vrule { grid-row: 2; grid-column: 1; padding-left: 5px; overflow: hidden; }
.hrule text, .vrule text { font: 9px "Open Sans", sans-serif; fill: #444; text-anchor: middle; }
.view { grid-row: 2; grid-column: 2; display: flex; justify-content: center; overflow: hidden; }
.page { display: flow-root; flex: none; width: 1347px; padding: 0 190px 0 192px; background: #fff; border: 1px solid #c6c6c6; border-top: 0; color: #000; }
.page p { margin: 0; font: 23px/35px Lato, "Open Sans", sans-serif; font-variant-ligatures: none; }
.page p span { display: block; text-align: justify; text-align-last: justify; white-space: nowrap; }
.page p .end { text-align-last: left; }
.grey { font-family: "Liberation Sans", sans-serif; color: #444; border: 1px solid #999; background: linear-gradient(#f6f6f6, #dedede); }
.prev { display: flow-root; height: 46px; margin: 0 34px 62px 103px; border-bottom: 2px solid #eee; }
.prev .grey { width: 75px; height: 33px; margin-top: -14px; font-size: 17px; line-height: 33px; display: block; }

.pic { position: relative; width: 1018px; height: 322px; margin: 26px 0 27px 1px; padding: 6px 16px 0 31px; border: 2px solid #96282b; font-family: "Liberation Sans", sans-serif; }
.crumb { font-size: 8px; line-height: 10px; }
.crumb a { color: #33f; text-decoration: none; }
.pic h2 { margin: 18px 0 19px; font-size: 18px; line-height: 22px; color: #111; }
table { width: 966px; table-layout: fixed; border-collapse: collapse; font-size: 10px; line-height: 11px; color: #222; }
.k1 { width: 97px; } .k2 { width: 50px; } .k3 { width: 271px; } .k4 { width: 35px; } .k5 { width: 19px; } .k6 { width: 52px; } .k7 { width: 67px; } .k8 { width: 70px; }
th, td { padding: 1px 0 0; text-align: left; white-space: nowrap; vertical-align: top; }
th { font-size: 11px; background: #b0d3df; color: #111; }
thead tr { height: 12px; }
tbody tr { height: 13px; }
tbody tr:nth-child(3n) { height: 12px; }
tbody tr:nth-child(odd) { background: #b0c4de; }
td:nth-child(8) { text-align: right; padding-right: 10px; }
td:nth-child(1) { padding: 0; }
td:nth-child(2) { display: flex; padding-left: 2px; gap: 4px; }
td b { color: #2c6fc4; font-size: 9px; line-height: 10px; }
.d { width: 14px; height: 12px; }
.f { width: 10px; height: 9px; margin-top: 2px; }
.tail { margin-left: 123px; }
.regs { display: flex; align-items: center; gap: 4px; margin-top: 12px; font-size: 11px; color: #444; height: 25px; }
.regs span { padding-top: 4px; }
.next { width: 83px; height: 23px; background: #999; color: #fff; font-weight: 700; font-size: 12px; border: 1px solid #aaa; border-bottom-color: #cdb184; }
.nova { display: block; margin-top: 17px; width: 77px; height: 22px; font-size: 12px; }
.redact { position: absolute; left: -1px; top: -2px; }
.handles { position: absolute; left: -11px; top: -51px; }
.rotate { position: absolute; left: 496px; top: -45px; }
.layopt { position: absolute; left: 1026px; top: -1px; width: 28px; height: 28px; border: 1px solid #ababab; background: #fff; display: grid; place-content: center; }

.scroll { grid-row: 1 / 3; grid-column: 3; display: flex; flex-direction: column; padding: 2px 1px 2px 0; }
.scroll button { height: 15px; border: 1px solid #ababab; background: #fff; display: grid; place-content: center; }
.track { flex: 1; background: #dadada; display: flex; flex-direction: column; justify-content: flex-end; }
.thumb { height: 16px; margin-bottom: 52px; background: #fff; border: 1px solid #ababab; }

/* status bar */
.status { flex: none; display: flex; align-items: center; height: 22px; background: #f1f1f1; padding: 0 8px; color: #555; }
.s1 { width: 100px; } .s2 { width: 88px; } .s3 { margin-left: 17px; flex: 1; }
.vb { width: 38px; height: 22px; display: grid; place-content: center; }
.vb.on { background: #cbcbcb; }
.zb { margin: 0 4px; }
.zoom { -webkit-appearance: none; appearance: none; width: 100px; height: 12px; margin: 0; background: linear-gradient(#999, #999) center / 1px 6px no-repeat, linear-gradient(#aaa, #aaa) center / 100% 1px no-repeat; }
.zoom::-webkit-slider-thumb { -webkit-appearance: none; width: 4px; height: 11px; background: #555; }
.pct { margin-left: 7px; width: 32px; text-align: right; }

/* taskbar */
.task { position: relative; flex: none; display: flex; align-items: center; height: 40px; background: linear-gradient(#555, #101010 2px, #0c0c0c); color: #fff; border-top: 1px solid #333; }
.wall { position: absolute; left: 556px; top: 1px; width: 810px; height: 39px; }
.tk { position: relative; flex: none; width: 58px; height: 38px; margin-right: 3px; display: grid; place-content: center; border-radius: 3px; }
.orb { width: 55px; margin-right: 6px; }
.tile { border: 1px solid #888; background: linear-gradient(160deg, #777, #333 40%, #222); }
.media { margin-right: 5px; }
.multi { width: 53px; margin-right: 10px; box-shadow: 3px 0 #222, 4px 0 #888; }
.act { border-color: #ddd; background: linear-gradient(160deg, #eee, #888 50%, #aaa); }
.pt { margin-left: auto; margin-right: 8px; padding-bottom: 4px; }
.tray { display: flex; align-items: center; gap: 10px; }
.kb { margin-right: 3px; margin-bottom: 4px; }
.clock { width: 88px; display: flex; flex-direction: column; text-align: center; line-height: 17px; margin-left: 2px; }
.desk { width: 13px; height: 38px; border: 1px solid #777; background: linear-gradient(160deg, #777, #222 50%); }
```
FILE: rulers.js
```js
// One centimetre on screen: 96 dpi at 170% zoom.
const CM = 96 / 2.54 * 1.7;
const rect = (x, y, w, h, f) => `<rect x="${x}" y="${y}" width="${w}" height="${h}" fill="${f}"/>`;

// Horizontal ruler: margins in grey, text column in white.
let h = rect(0, 5, 1347, 10, '#c6c6c6') + rect(192, 5, 963, 10, '#fff');
for (let q = -12; q <= 70; q++) {
  const x = Math.round(191 + q * CM / 4);
  if (q === 0 || q === 60) continue;
  if (q % 4 === 0) h += `<text x="${Math.max(x, 3)}" y="13">${Math.abs(q / 4)}</text>`;
  else if (q % 2 === 0) h += rect(x, 8, 1, 5, '#555');
  else h += rect(x, 10, 1, 2, '#555');
}
h += '<path d="M187.500 2.500h8v3l-4 5-4-5zM187.500 15.500l4-5 4 5v2h-8zM187.500 17.500h8v5h-8zM1150.500 18.500v-4l4-4 4 4v4z" fill="#fff" stroke="#777"/>';
document.getElementById('hr').innerHTML = h;

// Vertical ruler, starting just past centimetre 6.
let v = rect(0, 0, 11, 801, '#fff');
for (let q = 0; q <= 49; q++) {
  const y = Math.round(-1 + q * CM / 4);
  if (q % 4 === 0) v += `<text transform="translate(9 ${y}) rotate(-90)">${6 + q / 4}</text>`;
  else if (q % 2 === 0) v += rect(5, y, 5, 1, '#555');
  else v += rect(6, y, 2, 1, '#555');
}
document.getElementById('vr').innerHTML = v;
```
